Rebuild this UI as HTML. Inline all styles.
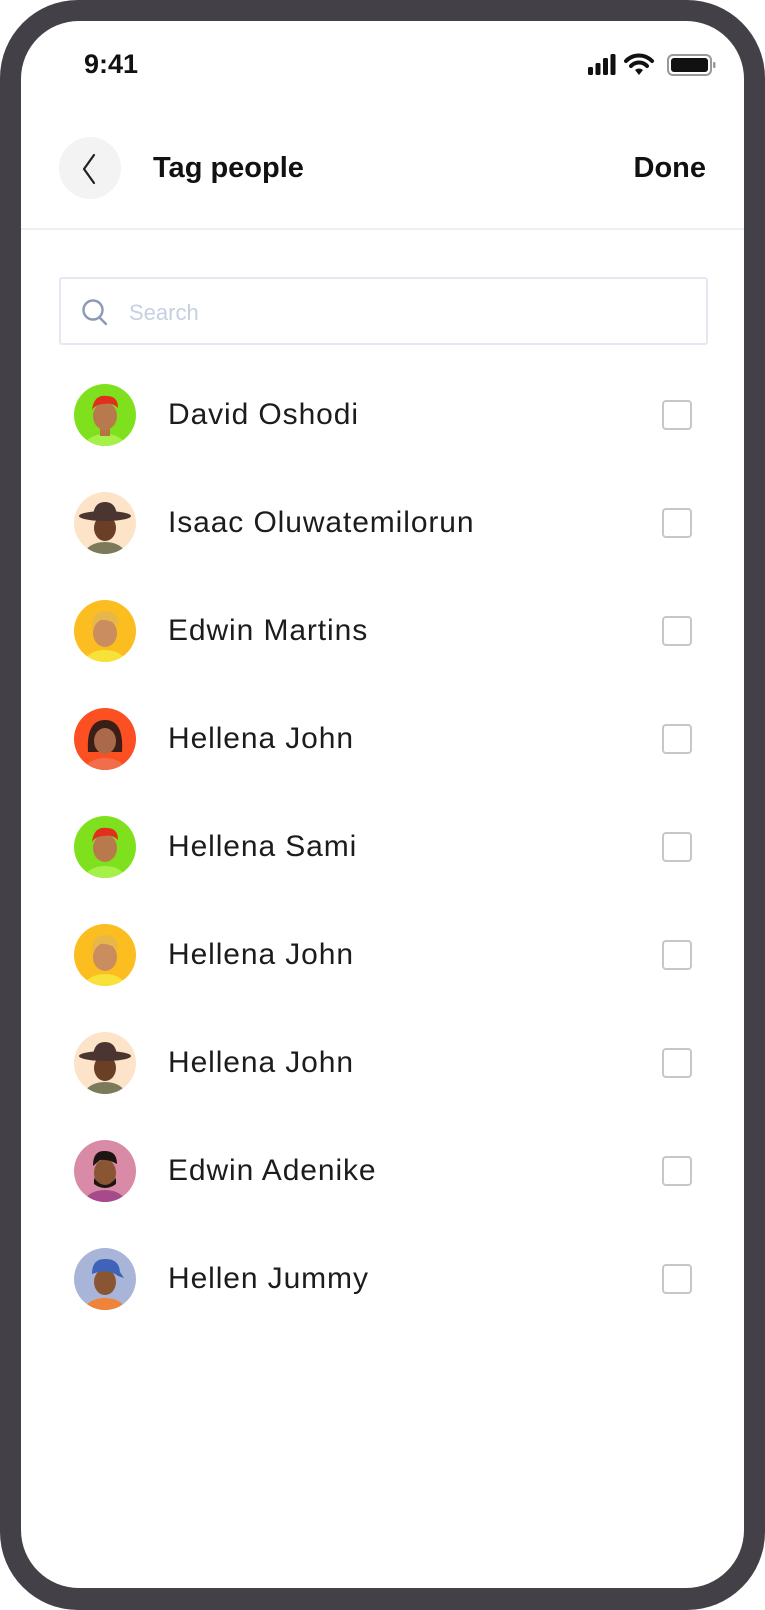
<!DOCTYPE html>
<html><head><meta charset="utf-8"><style>
*{margin:0;padding:0;box-sizing:border-box}
html,body{width:765px;height:1610px;background:#fff;overflow:hidden;font-family:"Liberation Sans",sans-serif}
.frame{position:absolute;left:0;top:0;width:765px;height:1610px;background:#434047;border-radius:78px}
.screen{position:absolute;left:21px;top:21px;width:723px;height:1567px;background:#fff;border-radius:58px;overflow:hidden}
.abs{position:absolute}
.time{left:63px;top:28px;font-size:27px;font-weight:bold;color:#111}
.back{left:38px;top:116px;width:62px;height:62px;border-radius:50%;background:#f3f3f3}
.title{left:132px;top:133px;font-size:29px;font-weight:bold;color:#111;line-height:1}
.done{right:38px;top:133px;font-size:29px;font-weight:bold;color:#111;line-height:1}
.div{left:0;top:207px;width:723px;height:2px;background:#eef0f3}
.search{left:38px;top:256px;width:649px;height:68px;border:2px solid #e3e8f1;border-radius:3px}
.ph{left:108px;top:279px;font-size:22px;color:#c6d0e1}
.row{position:absolute;left:0;width:723px;height:62px}
.av{position:absolute;left:53px;top:0}
.name{position:absolute;left:147px;top:13px;font-size:30px;letter-spacing:0.9px;color:#1c1c1c;line-height:36px}
.cb{position:absolute;left:641px;top:16px;width:30px;height:30px;border:2px solid #c7c7c7;border-radius:4px}
</style></head><body>
<div class="frame"></div>
<div class="screen">
<div class="abs time">9:41</div>
<svg class="abs" style="left:567px;top:32px" width="135" height="24" viewBox="0 0 135 24">
<rect x="0" y="14" width="5" height="8" rx="1.5" fill="#111"/><rect x="7.5" y="10" width="5" height="12" rx="1.5" fill="#111"/><rect x="15" y="5" width="5" height="17" rx="1.5" fill="#111"/><rect x="22.5" y="1" width="5" height="21" rx="1.5" fill="#111"/>
<path d="M38 8 A18 18 0 0 1 64 8" stroke="#111" stroke-width="4" fill="none" stroke-linecap="round"/>
<path d="M43 13 A11 11 0 0 1 59 13" stroke="#111" stroke-width="4" fill="none" stroke-linecap="round"/>
<path d="M47 17 L51 22 L55 17 A6 6 0 0 0 47 17Z" fill="#111"/>
<rect x="80" y="2" width="43" height="20" rx="5" fill="none" stroke="#999" stroke-width="2"/>
<rect x="83" y="5" width="37" height="14" rx="3" fill="#111"/>
<rect x="125" y="9" width="2.5" height="6" rx="1" fill="#999"/>
</svg>
<div class="abs back"></div>
<svg class="abs" style="left:56px;top:132px" width="26" height="32" viewBox="0 0 26 32"><path d="M17 2 L7 16 L17 30" stroke="#222" stroke-width="2.2" fill="none" stroke-linecap="round" stroke-linejoin="round"/></svg>
<div class="abs title">Tag people</div>
<div class="abs done">Done</div>
<div class="abs div"></div>
<div class="abs search"></div>
<svg class="abs" style="left:60px;top:276px" width="28" height="30" viewBox="0 0 28 30"><circle cx="12" cy="13" r="9.5" stroke="#8c9ab3" stroke-width="2.4" fill="none"/><path d="M19 21 L25 27" stroke="#8c9ab3" stroke-width="2.4" stroke-linecap="round"/></svg>
<div class="abs ph">Search</div>

<div class="row" style="top:363px"><svg class="av" width="62" height="62" viewBox="0 0 62 62"><defs><clipPath id="c1"><circle cx="31" cy="31" r="31"/></clipPath></defs><g clip-path="url(#c1)"><rect width="62" height="62" fill="#7fe11e"/><ellipse cx="31" cy="62" rx="20" ry="12" fill="#a6f04a"/><rect x="26" y="40" width="10" height="12" fill="#b57346"/><ellipse cx="31" cy="32" rx="12" ry="14" fill="#b87a4c"/><path d="M18 26 Q20 10 33 12 Q44 12 44 24 Q38 18 30 20 Q22 20 18 26Z" fill="#e0301c"/></g></svg><div class="name">David Oshodi</div><div class="cb"></div></div>

<div class="row" style="top:471px"><svg class="av" width="62" height="62" viewBox="0 0 62 62"><defs><clipPath id="c2"><circle cx="31" cy="31" r="31"/></clipPath></defs><g clip-path="url(#c2)"><rect width="62" height="62" fill="#fde4c8"/><ellipse cx="31" cy="62" rx="20" ry="12" fill="#7d7a5c"/><ellipse cx="31" cy="36" rx="11" ry="13" fill="#6b3f25"/><ellipse cx="31" cy="24" rx="26" ry="5" fill="#4a3530"/><path d="M19 24 Q20 10 31 10 Q42 10 43 24Z" fill="#4a3530"/></g></svg><div class="name">Isaac Oluwatemilorun</div><div class="cb"></div></div>

<div class="row" style="top:579px"><svg class="av" width="62" height="62" viewBox="0 0 62 62"><defs><clipPath id="c3"><circle cx="31" cy="31" r="31"/></clipPath></defs><g clip-path="url(#c3)"><rect width="62" height="62" fill="#fbbd20"/><ellipse cx="31" cy="62" rx="20" ry="12" fill="#f7e23a"/><ellipse cx="31" cy="33" rx="12" ry="14" fill="#c98d5f"/><path d="M18 28 Q18 10 32 11 Q45 12 44 26 Q36 19 26 20Z" fill="#e8b74a"/></g></svg><div class="name">Edwin Martins</div><div class="cb"></div></div>

<div class="row" style="top:687px"><svg class="av" width="62" height="62" viewBox="0 0 62 62"><defs><clipPath id="c4"><circle cx="31" cy="31" r="31"/></clipPath></defs><g clip-path="url(#c4)"><rect width="62" height="62" fill="#fc4f22"/><ellipse cx="31" cy="62" rx="20" ry="12" fill="#f26d4a"/><path d="M14 44 Q12 12 31 12 Q50 12 48 44Z" fill="#3b1f16"/><ellipse cx="31" cy="33" rx="11" ry="13" fill="#a9694a"/></g></svg><div class="name">Hellena John</div><div class="cb"></div></div>

<div class="row" style="top:795px"><svg class="av" width="62" height="62" viewBox="0 0 62 62"><g clip-path="url(#c1)"><rect width="62" height="62" fill="#7fe11e"/><ellipse cx="31" cy="62" rx="20" ry="12" fill="#a6f04a"/><ellipse cx="31" cy="32" rx="12" ry="14" fill="#b87a4c"/><path d="M18 26 Q20 10 33 12 Q44 12 44 24 Q38 18 30 20 Q22 20 18 26Z" fill="#e0301c"/></g></svg><div class="name">Hellena Sami</div><div class="cb"></div></div>

<div class="row" style="top:903px"><svg class="av" width="62" height="62" viewBox="0 0 62 62"><g clip-path="url(#c3)"><rect width="62" height="62" fill="#fbbd20"/><ellipse cx="31" cy="62" rx="20" ry="12" fill="#f7e23a"/><ellipse cx="31" cy="33" rx="12" ry="14" fill="#c98d5f"/><path d="M18 28 Q18 10 32 11 Q45 12 44 26 Q36 19 26 20Z" fill="#e8b74a"/></g></svg><div class="name">Hellena John</div><div class="cb"></div></div>

<div class="row" style="top:1011px"><svg class="av" width="62" height="62" viewBox="0 0 62 62"><g clip-path="url(#c2)"><rect width="62" height="62" fill="#fde4c8"/><ellipse cx="31" cy="62" rx="20" ry="12" fill="#7d7a5c"/><ellipse cx="31" cy="36" rx="11" ry="13" fill="#6b3f25"/><ellipse cx="31" cy="24" rx="26" ry="5" fill="#4a3530"/><path d="M19 24 Q20 10 31 10 Q42 10 43 24Z" fill="#4a3530"/></g></svg><div class="name">Hellena John</div><div class="cb"></div></div>

<div class="row" style="top:1119px"><svg class="av" width="62" height="62" viewBox="0 0 62 62"><defs><clipPath id="c8"><circle cx="31" cy="31" r="31"/></clipPath></defs><g clip-path="url(#c8)"><rect width="62" height="62" fill="#d88aa6"/><ellipse cx="31" cy="62" rx="20" ry="12" fill="#a64a8c"/><ellipse cx="31" cy="33" rx="11" ry="14" fill="#8a5532"/><path d="M20 38 Q31 52 42 38 L42 44 Q31 52 20 44Z" fill="#1d1512"/><path d="M19 26 Q19 10 31 11 Q43 11 43 24 Q35 19 26 20Z" fill="#1d1512"/></g></svg><div class="name">Edwin Adenike</div><div class="cb"></div></div>

<div class="row" style="top:1227px"><svg class="av" width="62" height="62" viewBox="0 0 62 62"><defs><clipPath id="c9"><circle cx="31" cy="31" r="31"/></clipPath></defs><g clip-path="url(#c9)"><rect width="62" height="62" fill="#a9b5d8"/><ellipse cx="31" cy="62" rx="20" ry="12" fill="#f0823a"/><ellipse cx="31" cy="34" rx="11" ry="13" fill="#8a5532"/><path d="M18 26 Q18 10 32 11 Q45 11 46 24 L50 30 L44 28 Q34 20 18 26Z" fill="#3e63b8"/></g></svg><div class="name">Hellen Jummy</div><div class="cb"></div></div>
</div>
</body></html>
